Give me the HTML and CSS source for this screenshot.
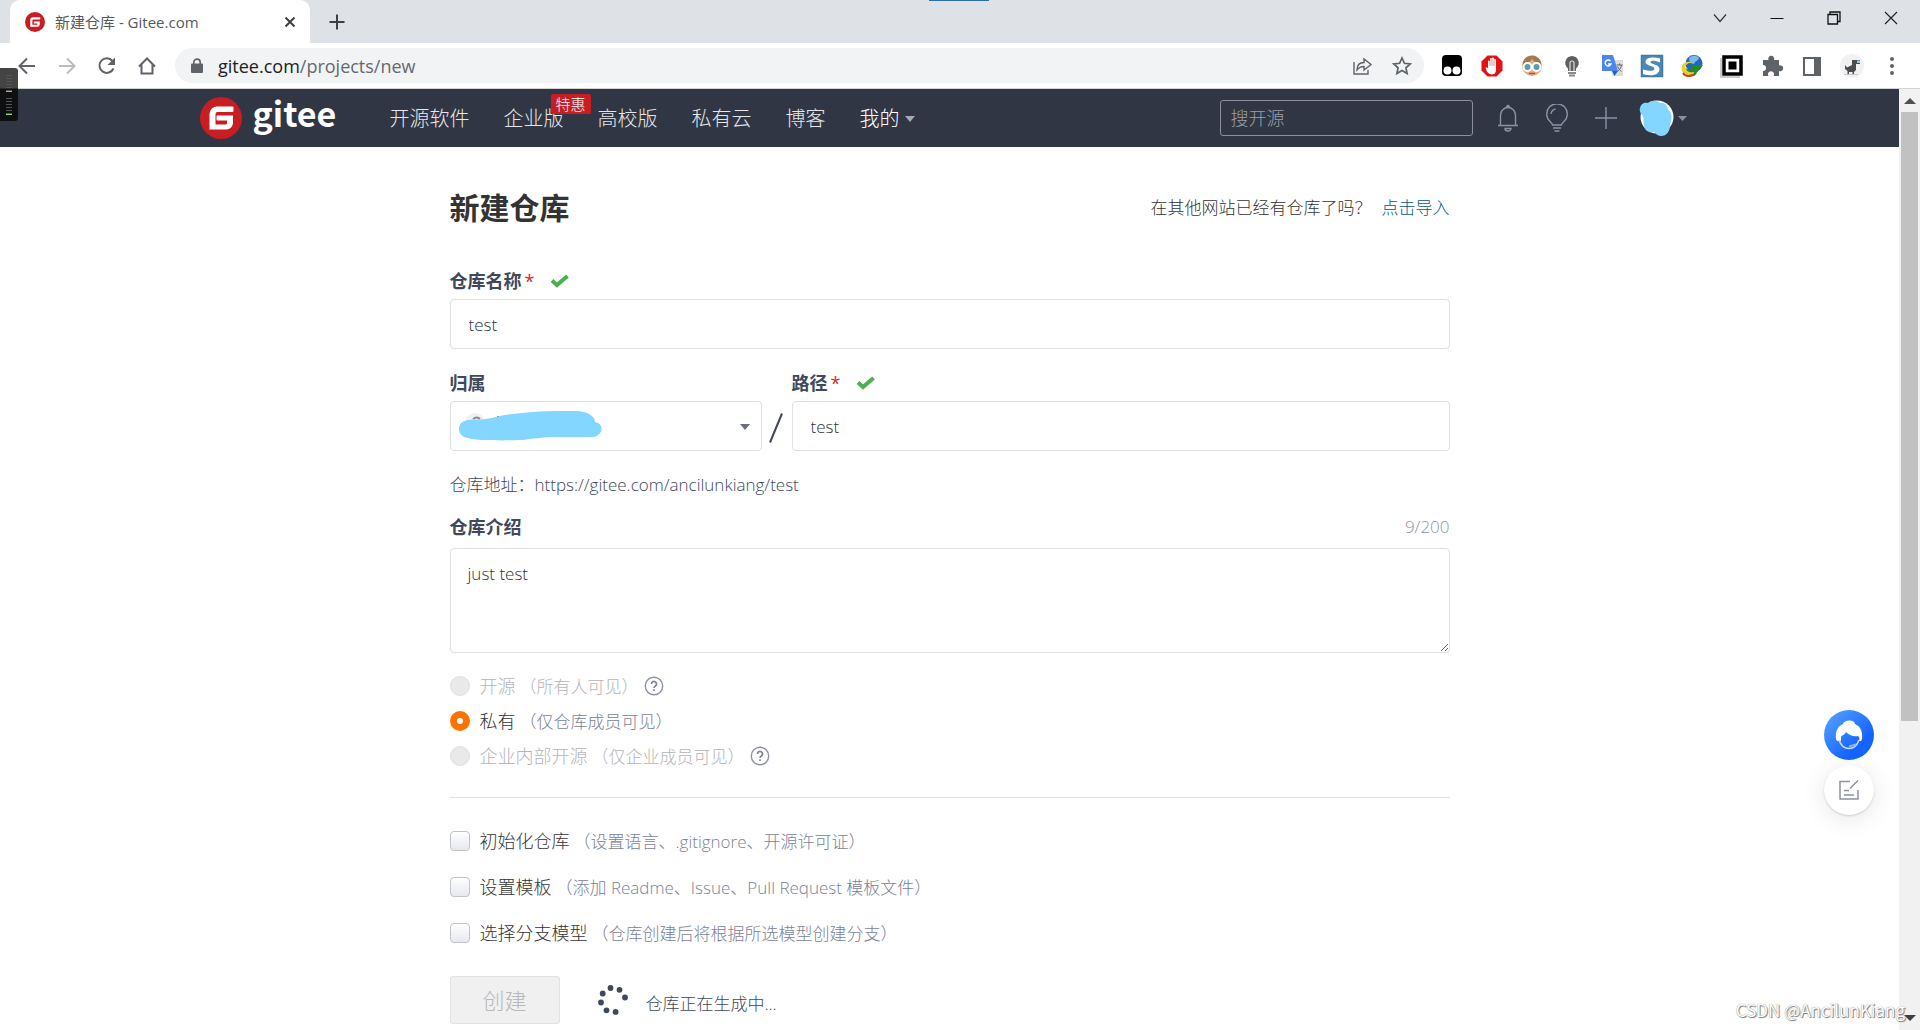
FILE: index.html
```html
<!DOCTYPE html>
<html lang="zh-CN">
<head>
<meta charset="utf-8">
<title>新建仓库 - Gitee.com</title>
<link rel="stylesheet" href="styles.css">
</head>
<body>
<div class="tabstrip">
  <div class="tab">
    <svg class="tab-icon" viewBox="0 0 42 42"><circle cx="21" cy="21" r="21" fill="#c71d23"/><path d="M32 11H17a6 6 0 0 0-6 6v14h15a5 5 0 0 0 5-5v-6H18.500v4H26v1.500a1.500 1.500 0 0 1-1.500 1.500H15.500V17.500a2 2 0 0 1 2-2H32z" fill="#fff"/></svg>
    <span class="tab-title">新建仓库 - Gitee.com</span>
    <button class="icon-btn" aria-label="关闭标签页"><svg width="12" height="12" viewBox="0 0 12 12"><path d="M1.500 1.500l9 9M10.500 1.500l-9 9" stroke="#3c4043" stroke-width="2"/></svg></button>
  </div>
  <button class="icon-btn new-tab" aria-label="新标签页"><svg width="16" height="16" viewBox="0 0 16 16"><path d="M8 0.500v15M0.500 8h15" stroke="#3c4043" stroke-width="2"/></svg></button>
  <div class="strip-mark"></div>
  <div class="window-buttons">
    <button class="icon-btn" aria-label="搜索标签页"><svg width="14" height="14" viewBox="0 0 14 14"><path d="M1 3.500l6 7 6-7" fill="none" stroke="#333" stroke-width="1.200"/></svg></button>
    <button class="icon-btn" aria-label="最小化"><svg width="14" height="14" viewBox="0 0 14 14"><path d="M0.500 7.500h13" stroke="#111"/></svg></button>
    <button class="icon-btn" aria-label="还原"><svg width="14" height="14" viewBox="0 0 14 14"><path d="M1 3.500h9.500V13H1zM3 3.500V1h10v9.500h-2.500" fill="none" stroke="#111" stroke-width="1.300"/></svg></button>
    <button class="icon-btn" aria-label="关闭"><svg width="14" height="14" viewBox="0 0 14 14"><path d="M1 1l12 12M13 1L1 13" stroke="#222" stroke-width="1.200"/></svg></button>
  </div>
</div>

<div class="toolbar">
  <button class="icon-btn" aria-label="后退"><svg width="20" height="20" viewBox="0 0 20 20"><path d="M18 10H3M10 2.500L2.500 10l7.500 7.500" fill="none" stroke="#5f6368" stroke-width="2"/></svg></button>
  <button class="icon-btn" aria-label="前进"><svg width="20" height="20" viewBox="0 0 20 20"><path d="M2 10h15M10 2.500l7.500 7.500-7.500 7.500" fill="none" stroke="#babcbe" stroke-width="2"/></svg></button>
  <button class="icon-btn" aria-label="刷新"><svg width="20" height="20" viewBox="0 0 20 20"><path d="M16.500 12.500A7.300 7.300 0 1 1 15.500 5" fill="none" stroke="#5f6368" stroke-width="2"/><path d="M18 1.500V9h-7.500z" fill="#5f6368"/></svg></button>
  <button class="icon-btn" aria-label="主页"><svg width="20" height="20" viewBox="0 0 20 20"><path d="M2 10.500l8-8 8 8M4.500 8.500v9h11v-9" fill="none" stroke="#5f6368" stroke-width="2"/></svg></button>
  <div class="address">
    <svg width="14" height="16" viewBox="0 0 14 16"><rect x="1" y="5.500" width="12" height="9.500" rx="1" fill="#5f6368"/><path d="M3.800 6V4.300a3.200 3.200 0 0 1 6.400 0V6" fill="none" stroke="#5f6368" stroke-width="1.600"/></svg>
    <span class="url">gitee.com<span class="url-path">/projects/new</span></span>
    <button class="icon-btn" aria-label="分享"><svg width="22" height="22" viewBox="0 0 22 22"><path d="M3 7v12h14v-4M6 15c0-5 3-7.500 7-7.500V4l7 5.500-7 5.500v-3.500c-3 0-5 .8-7 3.500z" fill="none" stroke="#5f6368" stroke-width="1.400"/></svg></button>
    <button class="icon-btn" aria-label="收藏"><svg width="20" height="20" viewBox="0 0 20 20"><path d="M10 2l2.400 5.300 5.800.6-4.300 3.900 1.200 5.700-5.100-2.900-5.100 2.900 1.200-5.700L1.800 7.900l5.800-.6z" fill="none" stroke="#5f6368" stroke-width="1.700"/></svg></button>
  </div>
  <div class="extensions">
    <svg viewBox="0 0 24 24"><rect x="2" y="1" width="20" height="21" rx="4" fill="#000"/><circle cx="7.500" cy="16.500" r="4" fill="#fff"/><circle cx="16.500" cy="16.500" r="4" fill="#fff"/></svg>
    <svg viewBox="0 0 24 24"><path d="M7.500 1.500h9l6 6v9l-6 6h-9l-6-6v-9z" fill="#e01214"/><path d="M8 14V7.500a1 1 0 0 1 2 0V5a1 1 0 0 1 2 0v-.5a1 1 0 0 1 2 0V6a1 1 0 0 1 2 0v10c0 3-2 4.500-4.300 4.500-2.700 0-4.700-2-6.200-6.500 1-.8 2-.3 2.500 0z" fill="#fff"/><path d="M10 6v6M12 5v7M14 6v6" stroke="#e01214" stroke-width=".5"/></svg>
    <svg viewBox="0 0 24 24"><circle cx="12" cy="12" r="10" fill="#e3ae86"/><path d="M2.500 11C3 4 8 1.500 12 1.500S21 4 21.500 11C16 10 14 7 12 5c-2 3-5 6-9.500 6z" fill="#a47850"/><circle cx="7.500" cy="13" r="4" fill="#5f9bb0" stroke="#fff" stroke-width="2"/><circle cx="16.500" cy="13" r="4" fill="#5f9bb0" stroke="#fff" stroke-width="2"/><path d="M9 19.500h6" stroke="#c2453c" stroke-width="1.500"/></svg>
    <svg viewBox="0 0 24 24"><path d="M12 2a7 7 0 0 0-4 12.500V17h8v-2.500A7 7 0 0 0 12 2z" fill="#5f5f5f"/><path d="M10 17V9a2 2 0 0 1 4 0v8" fill="none" stroke="#ddd" stroke-width="1.200"/><path d="M8 19h8M9 21.500h6" stroke="#8a8a8a" stroke-width="1.800"/></svg>
    <svg viewBox="0 0 24 24"><path d="M11 6h12v16H12z" fill="#dadce0"/><path d="M2 1h11l5 16H2z" fill="#4a86ee"/><path d="M12 17h6l-3.500 5z" fill="#2a56c6"/><path d="M10.500 7A3 3 0 1 0 11 10H8" fill="none" stroke="#fff" stroke-width="1.400"/><path d="M16.500 11h6M19.500 9.500V11M21.500 11c-.5 3-2 5-4 6.500M17.500 12.500c1 2 2.500 4 4 5" fill="none" stroke="#5f6368"/></svg>
    <svg viewBox="0 0 24 24"><rect x="1.500" y="1.500" width="21" height="21" fill="#4d88b4" stroke="#3f7ba6" stroke-width="1.500"/><path d="M20 4.500C14 2.500 6 3 5.500 7.500 5 12 15 11.500 14.500 15c-.4 2.500-6 2-11.500.5V20c7 2.500 16 1.500 16.500-4.500C20 10 10 10.500 10.500 8c.4-1.800 5-1.500 9.500.5z" fill="#fff"/></svg>
    <svg viewBox="0 0 24 24"><circle cx="14" cy="9.500" r="8.500" fill="#2465c0"/><path d="M9 4c3-3 8-3 10 0-1 3-4 3-5 6-3 0-5-3-5-6z" fill="#7eb9ec"/><path d="M2 17C0 9 8 6 13 9c-5-1-9 3-7 6 2 4 9 4 13 1-4 7-15 7-17 1z" fill="#e8ce31"/><path d="M3 19c2 4 9 4 13 0" fill="none" stroke="#d33829" stroke-width="1.800"/><path d="M12 11l11 0-9 11v-4c-5 1-8-1-8-4 2 2 4 2 6 1z" fill="#228b22"/></svg>
    <svg viewBox="0 0 24 24"><path d="M1 4v19h19" fill="none" stroke="#bbb" stroke-width="1.500"/><rect x="4" y="3" width="17" height="17" fill="#fff" stroke="#000" stroke-width="3.500"/><rect x="8.500" y="7.500" width="8" height="8" fill="#000"/></svg>
    <svg viewBox="0 0 24 24"><path d="M3 6h5.500a3 3 0 1 1 5.500 0h5v5.500a3 3 0 1 1 0 5.500v5h-5.500a3 3 0 1 0-5 0H3v-5a3 3 0 1 0 0-6z" fill="#5f6368"/></svg>
    <svg viewBox="0 0 24 24"><rect x="4" y="4" width="16" height="17" fill="#fff" stroke="#5f6368" stroke-width="2"/><path d="M14 3h7v19h-7z" fill="#5f6368"/></svg>
    <svg viewBox="0 0 24 24"><circle cx="12" cy="12" r="12" fill="#f1f1f2"/><path d="M12 6h8v4h-4v6l-2 2v2h-1.500v-2H9v2H7.500v-3L5 15v-4l2 2.500 5-2.500z" fill="#4a4c50"/><path d="M17 6.500h3v2.500h-3z" fill="#8bd3e6"/><path d="M4 20.500h14" stroke="#c5c6c8"/></svg>
    <svg viewBox="0 0 24 24"><g fill="#5f6368"><circle cx="12" cy="5" r="2"/><circle cx="12" cy="12" r="2"/><circle cx="12" cy="19" r="2"/></g></svg>
  </div>
</div>

<div class="viewport">
  <div class="page">
    <header class="site-header">
      <div class="header-inner">
        <a class="logo" href="#" aria-label="gitee">
          <svg width="42" height="42" viewBox="0 0 42 42"><circle cx="21" cy="21" r="21" fill="#c71d23"/><path d="M32.500 9.500H17A7.500 7.500 0 0 0 9.500 17v15.500h17a6.500 6.500 0 0 0 6.500-6.500v-7.500H17.500a1 1 0 0 0-1 1v3a1 1 0 0 0 1 1H27v2.500a1.500 1.500 0 0 1-1.500 1.500h-10V17a2 2 0 0 1 2-2h15a1 1 0 0 0 1-1v-3.500a1 1 0 0 0-1-1z" fill="#fff"/></svg>
          <span class="wordmark">gitee</span>
        </a>
        <nav class="nav">
          <a href="#">开源软件</a>
          <a href="#" class="has-badge">企业版<span class="badge">特惠</span></a>
          <a href="#">高校版</a>
          <a href="#">私有云</a>
          <a href="#">博客</a>
          <a href="#" class="mine">我的<svg width="10" height="6" viewBox="0 0 10 6"><path d="M0 0h10L5 6z" fill="#a6a9b2"/></svg></a>
        </nav>
        <input class="search" type="text" placeholder="搜开源" aria-label="搜开源">
        <div class="header-actions">
          <a href="#" aria-label="通知"><svg width="22" height="28" viewBox="0 0 22 28"><g fill="none" stroke="#8c92a4" stroke-width="1.400"><path d="M1 21.500h20M3.500 21.500V11a7.500 7.500 0 0 1 15 0v10.500"/><path d="M8 24.500a3 2.500 0 0 0 6 0z"/></g><circle cx="11" cy="2.500" r="1.800" fill="#8c92a4"/></svg></a>
          <a href="#" aria-label="发现"><svg width="24" height="28" viewBox="0 0 24 28"><path d="M7.500 21c0-1.500-1.200-2.200-2.500-3.400a10.300 10.300 0 1 1 14 0c-1.300 1.200-2.500 1.900-2.500 3.400zM6 10a6 6 0 0 1 4.500-5M8 24h8M9.500 27h5" fill="none" stroke="#8c92a4" stroke-width="1.400"/></svg></a>
          <a href="#" aria-label="新建"><svg width="22" height="22" viewBox="0 0 22 22"><path d="M11 0v22M0 11h22" stroke="#8c92a4" stroke-width="1.400"/></svg></a>
          <a href="#" class="account" aria-label="账户"><svg width="36" height="36" viewBox="0 0 36 36"><circle cx="18" cy="17" r="16.500" fill="#fff"/><path d="M1 8C2 3 6 2 9 3c4-3 9-3 12 0 4-1 7 2 8 6 5 5 4 11 2 16 0 6-3 11-9 11-4 0-5-3-7-4-5 1-9-1-10-6-1-3 0-7-1-10-2-2-4-5-3-8z" fill="#83d6ff"/></svg><svg width="9" height="5" viewBox="0 0 9 5"><path d="M0 0h9L4.500 5z" fill="#8a8f9d"/></svg></a>
        </div>
      </div>
    </header>

    <main class="content">
      <div class="title-row">
        <h1>新建仓库</h1>
        <p class="import">在其他网站已经有仓库了吗？<a href="#">点击导入</a></p>
      </div>
      <form>
        <div class="field">
          <div class="label-row"><label for="name">仓库名称</label><span class="star">*</span><svg class="tick" width="20" height="14" viewBox="0 0 20 14"><path d="M2 6.500l5 4.500L17.500 2" fill="none" stroke="#4caf50" stroke-width="4"/></svg></div>
          <input id="name" class="control" type="text" value="test">
        </div>
        <div class="path-row">
          <div class="field owner">
            <div class="label-row"><label for="owner">归属</label></div>
            <div class="select-wrap">
              <select id="owner" class="control"><option></option></select>
              <svg class="select-caret" width="10" height="6" viewBox="0 0 10 6"><path d="M0 0h10L5 6z" fill="#6b7080"/></svg>
              <svg class="scribble" width="160" height="48" viewBox="0 0 160 48"><circle cx="25" cy="22" r="10" fill="#f1f1f1"/><path d="M23 18q4-3 7 0M47 16h2" stroke="#888" stroke-width="2" fill="none"/><path d="M9 28c0-5 3-8 9-9 8-1 10 0 18-1 9-1 16-4 27-5 15-2 30-3 44-3 15 0 26-1 32 3 4 2 6 5 6 8 10 2 8 13-1 15H107c-15 0-25 2-34 3-12 0-20 1-30 0-11 0-18 0-25-2-6-1-9-4-9-9z" fill="#83d6ff"/></svg>
            </div>
          </div>
          <svg class="slash" width="14" height="30" viewBox="0 0 14 30"><path d="M1 29.500L13 .5" stroke="#40485b" stroke-width="2"/></svg>
          <div class="field path">
            <div class="label-row"><label for="path">路径</label><span class="star">*</span><svg class="tick" width="20" height="14" viewBox="0 0 20 14"><path d="M2 6.500l5 4.500L17.500 2" fill="none" stroke="#4caf50" stroke-width="4"/></svg></div>
            <input id="path" class="control" type="text" value="test">
          </div>
        </div>
        <p class="repo-url">仓库地址：https://gitee.com/ancilunkiang/test</p>
        <div class="field desc">
          <div class="label-row"><label for="desc">仓库介绍</label><span class="count">9/200</span></div>
          <textarea id="desc" class="control">just test</textarea>
        </div>
        <div class="radios">
          <div class="choice off"><input type="radio" name="vis" id="v1" disabled><label for="v1">开源<span class="hint">（所有人可见）</span></label><svg class="help" width="20" height="20" viewBox="0 0 20 20"><circle cx="10" cy="10" r="8.700" fill="none" stroke="#8c92a4" stroke-width="1.400"/><path d="M7.500 8a2.500 2.500 0 1 1 3.800 2.100c-.9.500-1.300.9-1.300 1.900M10 13.300v1.700" fill="none" stroke="#7d8394" stroke-width="1.700"/></svg></div>
          <div class="choice"><input type="radio" name="vis" id="v2" checked><label for="v2">私有<span class="hint">（仅仓库成员可见）</span></label></div>
          <div class="choice off"><input type="radio" name="vis" id="v3" disabled><label for="v3">企业内部开源<span class="hint">（仅企业成员可见）</span></label><svg class="help" width="20" height="20" viewBox="0 0 20 20"><circle cx="10" cy="10" r="8.700" fill="none" stroke="#8c92a4" stroke-width="1.400"/><path d="M7.500 8a2.500 2.500 0 1 1 3.800 2.100c-.9.500-1.300.9-1.300 1.900M10 13.300v1.700" fill="none" stroke="#7d8394" stroke-width="1.700"/></svg></div>
        </div>
        <hr>
        <div class="checks">
          <div class="choice"><input type="checkbox" id="c1"><label for="c1">初始化仓库<span class="hint">（设置语言、.gitignore、开源许可证）</span></label></div>
          <div class="choice"><input type="checkbox" id="c2"><label for="c2">设置模板<span class="hint">（添加 Readme、Issue、Pull Request 模板文件）</span></label></div>
          <div class="choice"><input type="checkbox" id="c3"><label for="c3">选择分支模型<span class="hint">（仓库创建后将根据所选模型创建分支）</span></label></div>
        </div>
        <div class="submit-row">
          <button class="create" type="submit" disabled>创建</button>
          <svg class="spinner" width="30" height="30" viewBox="0 0 30 30"><g fill="#40485b"><circle cx="12.500" cy="3" r="2.900"/><circle cx="21.500" cy="4.800" r="2.900"/><circle cx="27" cy="12.500" r="2.900"/><circle cx="4.700" cy="8.500" r="2.900"/><circle cx="3" cy="17.500" r="2.900"/><circle cx="8.500" cy="25.300" r="2.900"/><circle cx="17.600" cy="26.900" r="2.900"/></g></svg>
          <span class="loading">仓库正在生成中...</span>
        </div>
      </form>
    </main>
  </div>
  <div class="scrollbar">
    <svg width="12" height="7" viewBox="0 0 12 7"><path d="M0 7h12L6 1z" fill="#505050"/></svg>
    <div class="track"><div class="thumb"></div></div>
    <svg width="12" height="7" viewBox="0 0 12 7"><path d="M0 0h12L6 6z" fill="#404040"/></svg>
  </div>
</div>

<div class="floaters">
  <button class="float-btn service" aria-label="在线客服"><svg width="28" height="32" viewBox="0 0 28 32"><path d="M1 20C0 12 3 7 8 5c1-4 11-5 12 0 5 2 8 7 7 15l-1 2h-2c1-4 0-4-1-5-5 1-9-1-12-4-1 3-4 3-5 5v4H2z" fill="#fff"/><path d="M4 21c2 6 6 8.500 10 8.500s8-2.500 10-8.500" fill="none" stroke="#c5dcff" stroke-width="1.600"/><path d="M14 27.500l7-2" stroke="#8bb6ff" stroke-width="2"/></svg></button>
  <button class="float-btn feedback" aria-label="反馈"><svg width="20" height="20" viewBox="0 0 20 20"><path d="M11 1.500H1v17.500h18v-9M19 .5l-8 8M5 10.500h5M5 15h10" fill="none" stroke="#8c92a4" stroke-width="1.500"/></svg></button>
</div>
<div class="meter"><i class="bars"></i><i class="lit amber"></i><i class="bars"></i><i class="lit green"></i></div>
<div class="watermark">CSDN @AncilunKiang</div>
</body>
</html>
```
FILE: styles.css
```css
* { box-sizing: border-box; }
body {
  margin: 0;
  height: 100vh;
  display: flex;
  flex-direction: column;
  overflow: hidden;
  position: relative;
  background: #fff;
  color: #333;
  font-family: "Open Sans", "Noto Sans CJK SC", sans-serif;
  font-size: 17px;
  font-weight: 300;
  line-height: 24px;
}
h1, p { margin: 0; }
a { color: inherit; text-decoration: none; }
input, select, textarea, button { font: inherit; color: inherit; }
svg { display: block; flex: none; }
.icon-btn {
  display: flex;
  align-items: center;
  justify-content: center;
  width: 24px;
  height: 24px;
  padding: 0;
  border: 0;
  background: none;
}

/* browser chrome */
.tabstrip {
  display: flex;
  align-items: center;
  height: 43px;
  flex: none;
  padding: 0 17px 0 10px;
  background: #dee1e6;
  position: relative;
}
.tab {
  display: flex;
  align-items: center;
  gap: 10px;
  width: 300px;
  height: 43px;
  padding: 0 8px 0 15px;
  background: #fff;
  border-radius: 10px 10px 0 0;
}
.tab-icon { width: 20px; height: 20px; }
.tab-title { flex: 1; font-size: 15px; font-weight: 400; color: #55595d; }
.new-tab { margin-left: 15px; }
.strip-mark {
  position: absolute;
  top: 0;
  left: 929px;
  width: 60px;
  height: 1px;
  background: #2f6ea9;
}
.window-buttons {
  display: flex;
  gap: 33px;
  margin-left: auto;
  padding-bottom: 7px;
}
.toolbar {
  display: flex;
  align-items: center;
  gap: 16px;
  height: 46px;
  flex: none;
  padding: 0 16px 0 15px;
  border-bottom: 1px solid #d0d2d6;
}
.address {
  flex: 1;
  display: flex;
  align-items: center;
  gap: 16px;
  height: 35px;
  padding: 0 10px 0 15px;
  background: #f1f3f4;
  border-radius: 18px;
}
.url { flex: 1; margin-left: -2px; font-size: 18px; font-weight: 400; color: #202124; }
.url-path { color: #65696e; }
.extensions { display: flex; gap: 16px; }
.extensions svg { width: 24px; height: 24px; }

/* page */
.viewport { flex: 1; display: flex; min-height: 0; }
.page { flex: 1; overflow: hidden; }
.site-header { background: #313644; }
.header-inner {
  display: flex;
  align-items: center;
  max-width: 1500px;
  height: 58px;
  margin: 0 auto;
}
.logo { display: flex; align-items: center; gap: 11px; width: 190px; }
.wordmark {
  font-family: "Noto Sans CJK SC", sans-serif;
  font-size: 34px;
  font-weight: 700;
  line-height: 40px;
  padding-bottom: 10px;
  color: #fff;
}
.nav { display: flex; gap: 34px; padding-top: 2px; font-size: 20px; color: #e6e7ea; }
.has-badge { position: relative; }
.badge {
  position: absolute;
  left: 47px;
  top: -13px;
  height: 20px;
  padding: 0 5px;
  border-radius: 2px;
  background: #c71d23;
  color: #fff;
  font-size: 15px;
  line-height: 20px;
  white-space: nowrap;
}
.mine { display: flex; align-items: center; gap: 5px; color: #fff; }
.search {
  width: 253px;
  height: 36px;
  margin-left: auto;
  padding: 0 10px;
  border: 1px solid #8c909c;
  border-radius: 3px;
  background: none;
  font-size: 18px;
}
.search::placeholder { color: #9b9ea7; }
.header-actions {
  display: flex;
  align-items: center;
  gap: 26px;
  margin: 0 13px 0 24px;
}
.header-actions .account { display: flex; align-items: center; gap: 3px; margin-left: -4px; }

.content { max-width: 1000px; margin: 0 auto; padding-top: 41px; }
.title-row { display: flex; align-items: center; justify-content: space-between; }
h1 { font-size: 30px; line-height: 40px; font-weight: 700; }
.import a { color: #005980; margin-left: 10px; }
.field { display: flex; flex-direction: column; gap: 6px; }
form { padding-top: 41px; }
.label-row {
  display: flex;
  align-items: center;
  font-size: 18px;
  color: #40485b;
}
.label-row label { font-weight: 700; }
.star { margin-left: 3px; color: #db2828; font-weight: 400; }
.tick { margin-left: 16px; }
.control {
  width: 100%;
  height: 50px;
  padding: 0 18px;
  border: 1px solid #dcdfe3;
  border-radius: 4px;
  background: #fff;
  outline: 0;
}
.path-row { display: flex; align-items: flex-end; margin-top: 22px; }
.owner { width: 312px; }
.path { flex: 1; }
.slash { margin: 0 9px 8px 7px; }
.select-wrap { position: relative; }
select.control { appearance: none; display: block; }
.select-caret { position: absolute; right: 12px; top: 23px; }
.scribble { position: absolute; left: 0; top: 0; }
.repo-url { margin-top: 22px; color: #40485b; }
.desc { margin-top: 18px; gap: 9px; }
.count { margin-left: auto; font-size: 17px; color: #8c92a4; }
textarea.control {
  display: block;
  height: 105px;
  padding: 13px 17px;
  resize: vertical;
}
.radios { display: grid; gap: 11px; margin-top: 21px; }
.checks { display: grid; gap: 22px; }
.choice { display: flex; align-items: center; gap: 10px; height: 24px; }
.choice label { font-size: 18px; }
.hint { margin-left: 4px; color: #7c8296; font-size: 17px; }
.off label, .off .hint { color: #b4b5b8; }
.help { margin-left: -5px; }
.choice input { appearance: none; flex: none; width: 20px; height: 20px; margin: 0; }
.choice input[type="radio"] { border: 1px solid #e0e0e0; border-radius: 50%; background: #e9e9e9; }
.choice input[type="radio"]:checked { border: 7px solid #fe7300; background: #fff; }
.choice input[type="checkbox"] {
  border: 1px solid #c0c3cc;
  border-radius: 4px;
  background: linear-gradient(#fff, #e6e8ee);
}
hr { height: 1px; margin: 29px 0 31px; border: 0; background: #dce1e4; }
.submit-row { display: flex; align-items: center; margin-top: 31px; }
.create {
  width: 110px;
  height: 48px;
  padding: 0;
  border: 1px solid #e3e3e3;
  border-radius: 3px;
  background: #f0f0f0;
  color: #b8b8b8;
  font-size: 22px;
}
.spinner { margin: 0 18px 0 38px; }
.loading { padding-top: 7px; color: #40485b; }

.scrollbar {
  display: flex;
  flex-direction: column;
  align-items: center;
  gap: 8px;
  width: 21px;
  padding: 8px 0;
  background: #f1f1f1;
}
.track { flex: 1; width: 17px; }
.thumb { height: 68%; background: #c1c1c1; }

/* overlays */
.floaters {
  position: absolute;
  right: 46px;
  bottom: 215px;
  display: grid;
  gap: 5px;
}
.float-btn {
  display: flex;
  align-items: center;
  justify-content: center;
  width: 50px;
  height: 50px;
  padding: 0;
  border: 0;
  border-radius: 50%;
}
.service { background: linear-gradient(135deg, #5aa6ff, #1664ff 70%); }
.feedback { background: #fff; box-shadow: 0 1px 2px rgba(0, 0, 0, .15), 0 4px 24px rgba(0, 0, 0, .1); }
.meter {
  position: absolute;
  left: 0;
  top: 68px;
  width: 18px;
  height: 53px;
  padding: 7px 6px;
  border-radius: 0 3px 3px 0;
  background: linear-gradient(#444 0 20px, #0e0f11 21px);
}
.meter i { display: block; }
.bars { height: 16px; background: repeating-linear-gradient(#555 0 1px, transparent 1px 3px); }
.lit { height: 1px; margin-bottom: 6px; }
.amber { background: #f0a040; }
.green { background: #90e050; }
.watermark {
  position: absolute;
  right: 15px;
  bottom: 8px;
  font-family: "Noto Sans CJK SC", sans-serif;
  font-size: 17px;
  font-weight: 400;
  color: #fff;
  text-shadow: 0 0 1px #777, 1px 1px 1px #777;
}
```
